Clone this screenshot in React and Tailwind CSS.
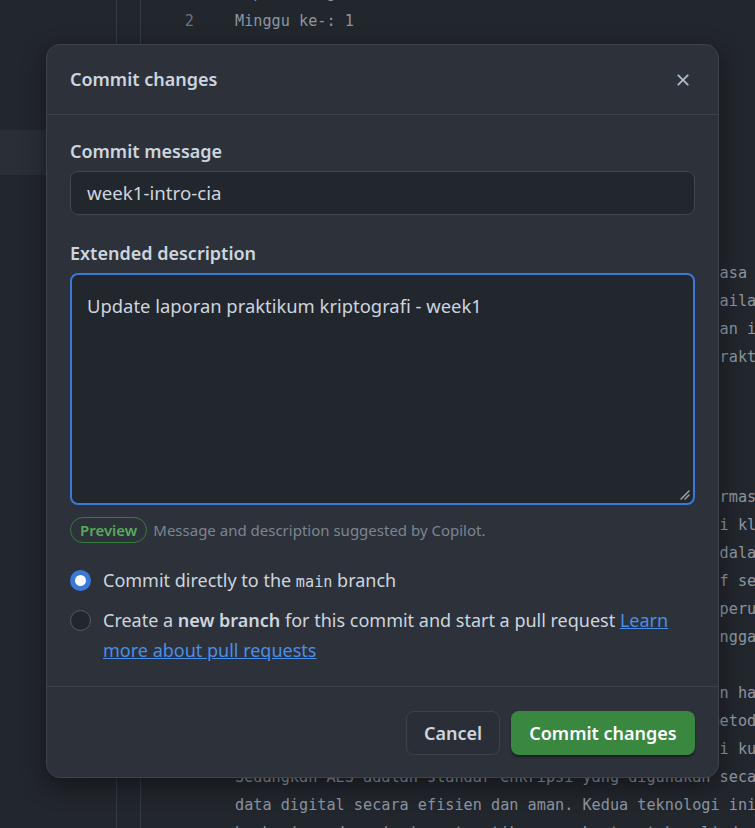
import React from 'react';

const codeLines = [
  'Topik: Pengantar Keamanan Informasi',
  'Minggu ke-: 1',
  '',
  '',
  '',
  '',
  '',
  '',
  '',
  '',
  'Keamanan informasi memiliki tiga pilar utama, yang biasa kita kenal',
  'yaitu Confidentiality (kerahasiaan), Integrity dan Availability',
  '(ketersediaan). Ketiga aspek ini menjadi dasar keamanan informasi',
  'yang dipelajari pada pertemuan pertama, mata kuliah praktikum',
  '',
  '',
  '',
  '',
  'Confidentiality berarti menjaga rahasia data dan informasi',
  'agar tidak bisa diakses pihak lain. Metode kriptografi klasik seperti',
  'seperti Caesar Cipher dan Vigenere Cipher, digunakan dalam proses',
  'menyandikan pesan, dengan metode substitusi alternatif sebagai',
  'Integrity (integritas) menjamin data tidak mengalami perubahan',
  'yang tidak sah selama proses transmisi berlangsung hingga',
  '',
  'Availability berarti sistem tetap dapat diakses dengan hadirnya',
  'gangguan. Pada praktikum ini juga diperkenalkan dua metode',
  'enkripsi yaitu RSA yang termasuk algoritma kriptografi kunci publik,',
  'Sedangkan AES adalah standar enkripsi yang digunakan secara luas',
  'data digital secara efisien dan aman. Kedua teknologi ini',
  'berbasis pada prinsip matematika yang kuat untuk melindungi',
];

const lineNumbers = { 1: '1', 2: '2' };

const CloseIcon = () => (
  <svg width="20" height="20" viewBox="0 0 16 16" fill="#adbac7">
    <path d="M3.72 3.72a.75.75 0 0 1 1.06 0L8 6.94l3.22-3.22a.749.749 0 0 1 1.275.326.749.749 0 0 1-.215.734L9.06 8l3.22 3.22a.749.749 0 0 1-.326 1.275.749.749 0 0 1-.734-.215L8 9.06l-3.22 3.22a.751.751 0 0 1-1.042-.018.751.751 0 0 1-.018-1.042L6.94 8 3.72 4.78a.75.75 0 0 1 0-1.06Z" />
  </svg>
);

const ResizeHandle = () => (
  <svg width="12" height="12" viewBox="0 0 12 12" className="absolute right-[3px] bottom-[3px]">
    <path d="M11 3 L3 11 M11 7 L7 11" stroke="#9aa4ad" strokeWidth="1.5" strokeLinecap="round" />
  </svg>
);

const App = () => {
  return (
    <div className="relative h-[828px] w-full overflow-hidden bg-[#22262d]">
      {/* editor behind the dialog */}
      <div className="flex h-full">
        <div className="w-[117px] shrink-0 border-r border-[#343a42]">
          <div className="mt-[130px] h-[45px] bg-[#2a2f37]"></div>
        </div>
        <div className="w-[24px] shrink-0 border-r border-[#343a42]"></div>
        <div
          className="flex-1 -mt-[21px] text-[#8d96a0] text-[15.2px]"
          style={{ fontFamily: '"DejaVu Sans Mono", monospace' }}
        >
          {codeLines.map((line, i) => (
            <div key={i} className="flex h-[28px] items-center whitespace-pre">
              <span className="w-[53px] shrink-0 text-right text-[#6b7480]">{lineNumbers[i + 1] || ''}</span>
              <span className="pl-[41px]">{line}</span>
            </div>
          ))}
        </div>
      </div>

      {/* dialog */}
      <div
        className="absolute left-[46px] top-[44px] w-[673px] h-[734px] flex flex-col rounded-[14px] border border-[#3d434b] bg-[#2c313a] shadow-[0_8px_24px_rgba(0,0,0,0.45)]"
        style={{ fontFamily: '"Noto Sans", "Open Sans", sans-serif' }}
      >
        <div className="flex h-[70px] shrink-0 items-center justify-between border-b border-[#3d434b] pl-[23px] pr-[25px]">
          <h2 className="text-[18px] font-semibold text-[#cdd5df]">Commit changes</h2>
          <CloseIcon />
        </div>

        <div className="flex-1 pl-[23px] pr-[23px] pt-[24px]">
          <label className="block h-[24px] leading-[24px] text-[18px] font-semibold text-[#cdd5df]">Commit message</label>
          <div className="mt-[8px] flex h-[44px] items-center rounded-[8px] border border-[#41474f] bg-[#22262d] px-4 text-[18.7px] text-[#cdd5df]">
            week1-intro-cia
          </div>

          <label className="mt-[26px] block h-[24px] leading-[24px] text-[18px] font-semibold text-[#cdd5df]">Extended description</label>
          <div className="relative mt-[8px] h-[232px] rounded-[8px] border-2 border-[#3b78d8] bg-[#22262d] px-[15px] pt-[17px] text-[18.4px] text-[#cdd5df]">
            Update laporan praktikum kriptografi - week1
            <ResizeHandle />
          </div>

          <div className="mt-[12px] flex items-center gap-[6px]">
            <span className="flex h-[26px] items-center rounded-full border border-[#347d39] px-[9px] text-[15px] font-semibold text-[#57ab5a]">
              Preview
            </span>
            <span className="text-[15px] text-[#7d8590]">Message and description suggested by Copilot.</span>
          </div>

          <div className="mt-[22px] flex h-[30px] items-center gap-3">
            <span className="h-[21px] w-[21px] shrink-0 rounded-full border-[5px] border-[#3b78d8] bg-white"></span>
            <span className="text-[18px] leading-[30px] text-[#cdd5df]">
              Commit directly to the{' '}
              <code className="text-[15.2px] leading-none" style={{ fontFamily: '"DejaVu Sans Mono", monospace' }}>main</code> branch
            </span>
          </div>

          <div className="mt-[10px] flex items-start gap-3">
            <span className="mt-[5px] h-[21px] w-[21px] shrink-0 rounded-full border border-[#545d68] bg-[#22262d]"></span>
            <span className="text-[18px] leading-[30px] text-[#cdd5df]">
              Create a <b className="font-semibold">new branch</b> for this commit and start a pull request{' '}
              <a className="text-[#4a8fe7] underline">
                Learn
                <br />
                more about pull requests
              </a>
            </span>
          </div>
        </div>

        <div className="flex h-[91px] shrink-0 items-start justify-end gap-[11px] border-t border-[#3d434b] pl-6 pr-[23px] pt-[24px]">
          <button className="h-[44px] w-[94px] rounded-[8px] border border-[#3d434b] bg-[#2a2f37] text-[18px] font-semibold text-[#cdd5df]">
            Cancel
          </button>
          <button className="h-[44px] w-[184px] rounded-[8px] bg-[#3a873f] text-[18px] font-semibold text-white shadow-[0_2px_2px_rgba(0,0,0,0.4)]">
            Commit changes
          </button>
        </div>
      </div>
    </div>
  );
};

export default App;
